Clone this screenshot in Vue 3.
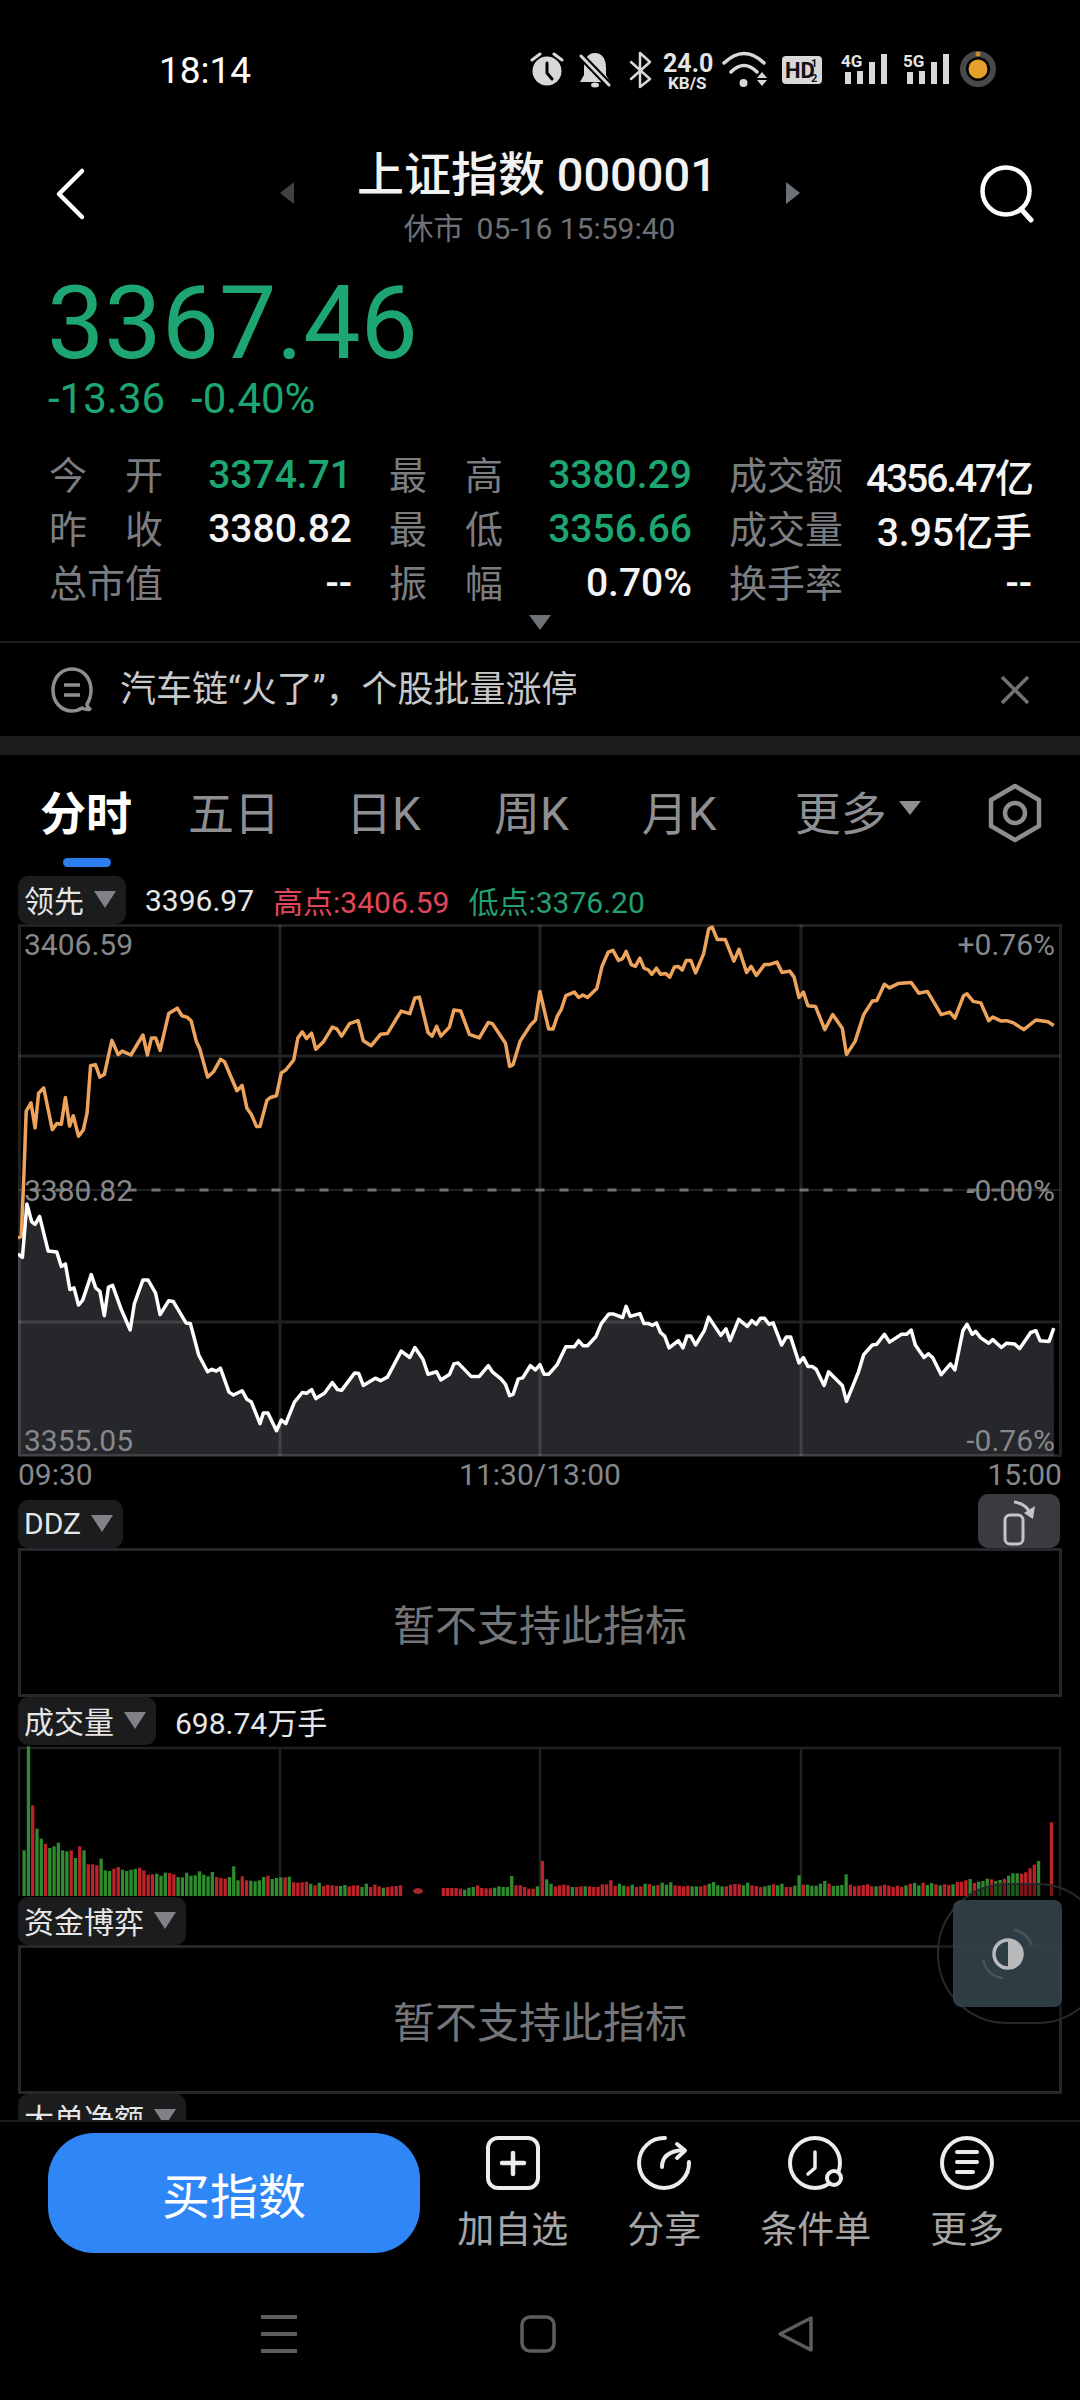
<template>
  <div class="page">
    <div class="scroll">
      <div class="status">
        <span class="clock">18:14</span>
        <svg class="status-icons" width="470" height="44" viewBox="530 48 470 44">
          <g fill="#d8d8d8" stroke="none">
            <circle cx="547" cy="71" r="14.5" />
            <path d="M595 53c-8 0-11 7-11 15v7l-4 7h30l-4-7v-7c0-8-3-15-11-15z" />
            <ellipse cx="595" cy="85" rx="4" ry="2.5" />
            <circle cx="743.5" cy="83" r="4" />
            <path d="M762 72l5 6h-10zM762 86l5-6h-10z" />
            <rect x="782" y="56" width="40" height="28" rx="4" />
            <rect x="845" y="72" width="6" height="12" /><rect x="857" y="71" width="6" height="13" />
            <rect x="869" y="62" width="6" height="22" /><rect x="881" y="54" width="6" height="30" />
            <rect x="907" y="72" width="6" height="12" /><rect x="919" y="71" width="6" height="13" />
            <rect x="931" y="62" width="6" height="22" /><rect x="943" y="54" width="6" height="30" />
          </g>
          <g fill="none" stroke="#d8d8d8" stroke-width="3" stroke-linecap="round">
            <path d="M532 60l8-6M554 54l8 6" />
            <path d="M547 63v10l5 6" stroke="#000" />
            <path d="M581 56l28 29" stroke="#000" stroke-width="7" />
            <path d="M581 56l28 29" />
            <path d="M631 62l19 17-10 8V53l10 9-19 17" stroke-width="2.5" stroke-linejoin="round" />
            <path d="M724 63Q744 44 764 63M731 72Q744 59 757 72" stroke-width="3.5" />
          </g>
          <text class="st-speed" x="663" y="72">24.0</text>
          <text class="st-kb" x="668" y="89">KB/S</text>
          <text class="st-hd" x="785" y="78">HD</text>
          <text class="st-frac" x="811" y="67">1</text>
          <text class="st-frac" x="811" y="82">2</text>
          <text class="st-g" x="841" y="67">4G</text>
          <text class="st-g" x="903" y="67">5G</text>
          <circle cx="978" cy="69" r="15" fill="none" stroke="#48494b" stroke-width="6" />
          <circle cx="978" cy="69" r="9.5" fill="#e6a02c" />
          <circle cx="978" cy="54" r="2.5" fill="#c98a2a" />
        </svg>
      </div>

      <div class="nav">
        <svg class="back" width="40" height="56" viewBox="0 0 40 56">
          <path d="M30 5L7 28l23 23" fill="none" stroke="#fff" stroke-width="4.5" stroke-linecap="round" stroke-linejoin="round" />
        </svg>
        <div class="nav-mid">
          <i class="tri-left"></i>
          <div class="title-box">
            <div class="title">上证指数 000001</div>
            <div class="subtitle"><span class="sub-state">休市</span>05-16 15:59:40</div>
          </div>
          <i class="tri-right"></i>
        </div>
        <svg class="search" width="56" height="58" viewBox="0 0 56 58">
          <circle cx="26" cy="26" r="23.5" fill="none" stroke="#fff" stroke-width="4.5" />
          <path d="M41 44l10 11" stroke="#fff" stroke-width="5" stroke-linecap="round" />
        </svg>
      </div>

      <div class="price">3367.46</div>
      <div class="change"><span>-13.36</span><span>-0.40%</span></div>

      <div class="stats">
        <div v-for="(s, i) in stats" :key="i" class="stat">
          <span class="stat-label">
            <b v-for="(ch, j) in s.label" :key="j">{{ ch }}</b>
          </span>
          <span class="stat-value" :class="s.tone">{{ s.value }}</span>
        </div>
      </div>
      <div class="expand"><i class="tri-down"></i></div>

      <div class="news">
        <svg width="46" height="46" viewBox="0 0 46 46" fill="none" stroke="#8c8e91" stroke-width="3.5">
          <path d="M41 42c-3 1-6 0-8-1-3 2-7 3-10 3C12 44 4 35 4 23S12 2 23 2s19 9 19 21c0 6-2 11-4 14 0 2 1 4 3 5z" stroke-linejoin="round" />
          <path d="M15 18h16M15 28h16" stroke-width="3.5" />
        </svg>
        <span class="news-text">汽车链“火了”，个股批量涨停</span>
        <svg class="news-close" width="30" height="30" viewBox="0 0 30 30">
          <path d="M2 2l26 26M28 2L2 28" stroke="#707275" stroke-width="3.5" />
        </svg>
      </div>
      <div class="band"></div>

      <div class="tabs">
        <span class="tab active">分时</span>
        <span class="tab five">五日</span>
        <span class="tab">日K</span>
        <span class="tab">周K</span>
        <span class="tab month">月K</span>
        <span class="tab more">更多<i class="tri-more"></i></span>
        <svg class="gear" width="54" height="60" viewBox="0 0 54 60" fill="none" stroke="#8c8e91" stroke-width="4.5" stroke-linejoin="round">
          <path d="M27 3l24 14v26L27 57 3 43V17z" />
          <circle cx="27" cy="30" r="10" />
        </svg>
      </div>
      <div class="tab-mark"></div>

      <div class="chart-wrap">
        <div class="legend">
          <div class="pill">领先<i class="tri"></i></div>
          <span class="lg-value">3396.97</span>
          <span class="lg-high">高点:3406.59</span>
          <span class="lg-low">低点:3376.20</span>
        </div>

        <svg class="chart" width="1044" height="533" viewBox="18 924 1044 533">
          <path :d="whiteArea" fill="#26272a" />
          <g stroke="rgba(255,255,255,0.13)" stroke-width="3" fill="none">
            <rect x="19.5" y="925.5" width="1041" height="530" />
            <path d="M280 925V1456M540 925V1456M801 925V1456M18 1056H1060M18 1322H1060" />
          </g>
          <path d="M18 1190H1060" stroke="rgba(255,255,255,0.12)" stroke-width="2" />
          <path d="M18 1190H1060" stroke="#707173" stroke-width="3" stroke-dasharray="9 15" stroke-dashoffset="10.5" />
          <polyline :points="orangeLine" fill="none" stroke="#eea35d" stroke-width="3.5" stroke-linejoin="round" />
          <polyline :points="whiteLine" fill="none" stroke="#fff" stroke-width="3.5" stroke-linejoin="round" />
          <text class="ch-txt" x="24" y="955">3406.59</text>
          <text class="ch-txt" x="24" y="1201">3380.82</text>
          <text class="ch-txt" x="24" y="1451">3355.05</text>
          <text class="ch-txt" x="1055" y="955" text-anchor="end">+0.76%</text>
          <text class="ch-txt" x="1055" y="1201" text-anchor="end">-0.00%</text>
          <text class="ch-txt" x="1055" y="1451" text-anchor="end">-0.76%</text>
        </svg>
        <div class="axis"><span>09:30</span><span>11:30/13:00</span><span>15:00</span></div>

        <div class="legend ddz">
          <div class="pill">DDZ<i class="tri"></i></div>
          <div class="rotate">
            <svg width="44" height="50" viewBox="0 0 44 50" fill="none" stroke="#c4c5c7" stroke-width="3">
              <rect x="8" y="17" width="18" height="29" rx="5" />
              <path d="M17 4c9 1 15 6 18 15" />
              <path d="M38 8l-2 13-9-6z" stroke="none" fill="#c4c5c7" />
            </svg>
          </div>
        </div>
        <div class="empty">暂不支持此指标</div>

        <div class="legend">
          <div class="pill">成交量<i class="tri"></i></div>
          <span class="lg-value">698.74万手</span>
        </div>
        <svg class="volume" width="1044" height="152" viewBox="18 1745 1044 152">
          <g stroke="rgba(255,255,255,0.13)" stroke-width="2.5" fill="none">
            <path d="M19 1896V1748H1060V1896M280 1748V1896M540 1748V1896M801 1748V1896" />
          </g>
          <rect v-for="(b, i) in bars" :key="i" :x="b.x" :y="b.y" width="3.3" :height="b.h" :fill="b.fill" />
          <ellipse cx="418" cy="1891" rx="5" ry="3" fill="#a2262c" />
        </svg>

        <div class="legend">
          <div class="pill">资金博弈<i class="tri"></i></div>
        </div>
        <div class="empty">暂不支持此指标</div>
        <div class="legend">
          <div class="pill">大单净额<i class="tri"></i></div>
        </div>
      </div>
    </div>

    <div class="bottom">
      <div class="actions">
        <div class="buy">买指数</div>
        <div class="act">
          <svg width="60" height="60" viewBox="483 2133 60 60" fill="none" stroke="#ececec" stroke-width="4" stroke-linecap="round">
            <rect x="488" y="2138" width="50" height="50" rx="10" />
            <path d="M513 2153v21M502 2163h22" stroke-width="4.5" />
          </svg>
          <span>加自选</span>
        </div>
        <div class="act">
          <svg width="60" height="60" viewBox="634 2133 60 60" fill="none" stroke="#ececec" stroke-width="4" stroke-linecap="round" stroke-linejoin="round">
            <path d="M665 2138A25 25 0 1 0 689 2162" />
            <path d="M662 2167c0-10 7-16 21-17" />
            <path d="M677 2144l8 6.500-8 7.500" />
          </svg>
          <span>分享</span>
        </div>
        <div class="act">
          <svg width="60" height="60" viewBox="786 2133 60 60" fill="none" stroke="#ececec" stroke-width="4" stroke-linecap="round" stroke-linejoin="round">
            <circle cx="815" cy="2163" r="25" />
            <path d="M815 2152v16l-7 6" stroke-width="3.500" />
            <circle cx="834" cy="2178" r="7" fill="#000" />
          </svg>
          <span>条件单</span>
        </div>
        <div class="act">
          <svg width="60" height="60" viewBox="938 2133 60 60" fill="none" stroke="#ececec" stroke-width="4" stroke-linecap="round">
            <circle cx="968" cy="2163" r="25" />
            <path d="M958 2152h20M958 2162h20M958 2172h16" />
          </svg>
          <span>更多</span>
        </div>
      </div>
      <div class="sysnav">
        <svg width="40" height="38" viewBox="0 0 40 38">
          <path d="M2 2h36M2 19h36M2 36h36" stroke="#5c5d5f" stroke-width="4" />
        </svg>
        <svg width="38" height="38" viewBox="0 0 38 38">
          <rect x="3" y="2" width="32" height="34" rx="8" fill="none" stroke="#5c5d5f" stroke-width="3.5" />
        </svg>
        <svg width="38" height="38" viewBox="0 0 38 38">
          <path d="M34 3v32L3 19z" fill="none" stroke="#5c5d5f" stroke-width="3.5" stroke-linejoin="round" />
        </svg>
      </div>
    </div>

    <div class="float-ring"></div>
    <div class="float-btn">
      <svg width="70" height="72" viewBox="0 0 70 72" fill="none">
        <circle cx="35" cy="36" r="14" stroke="#b8babc" stroke-width="3.5" />
        <path d="M35 21a15 15 0 0 1 0 30z" fill="#b8babc" />
        <path d="M41 12c8 1 15 7 18 15M30 60C20 59 12 52 10 42" stroke="#46555c" stroke-width="2.5" />
      </svg>
    </div>
  </div>
</template>

<script setup>
import { computed } from "vue";

const stats = [
  { label: "今开", value: "3374.71", tone: "down" },
  { label: "最高", value: "3380.29", tone: "down" },
  { label: "成交额", value: "4356.47亿", tone: "tight" },
  { label: "昨收", value: "3380.82" },
  { label: "最低", value: "3356.66", tone: "down" },
  { label: "成交量", value: "3.95亿手" },
  { label: "总市值", value: "--" },
  { label: "振幅", value: "0.70%" },
  { label: "换手率", value: "--" },
];

// traced from the reference, left half then right half (x scale 2.904, y scale 2.8)
const orangeL = [52,890,62,886,70,700,76,535,90,512,102,582,112,485,127,470,152,587,165,570,178,572,190,497,202,577,213,548,228,605,242,588,253,540,263,408,277,405,290,440,303,433,325,337,343,377,355,367,380,378,415,322,428,378,440,330,452,330,465,365,490,262,515,247,528,268,543,272,555,282,570,340,580,360,603,440,620,425,640,390,652,397,688,478,703,463,717,527,730,545,745,578,755,578,775,505,785,497,803,492,817,428,830,420,853,392,865,330,878,313,890,332,905,317,917,362,940,340,965,300,978,305,992,325,1015,290,1040,282,1055,338,1078,352,1105,320,1125,318,1150,278,1165,255,1190,262,1205,218,1218,216,1243,315,1255,325,1268,298,1280,325,1305,300,1318,252,1338,255,1363,320,1392,330,1418,287,1430,290,1468,345,1480,410,1490,405,1510,340,1540,295,1555,280,1568,200];
const orangeR = [25,305,38,305,50,270,62,250,75,212,100,202,112,217,125,210,138,217,165,192,180,130,198,90,212,85,228,113,240,108,250,88,265,125,277,130,290,107,302,135,315,140,325,152,338,135,350,152,365,150,377,160,390,132,402,130,413,140,425,113,438,113,452,148,475,95,490,25,500,20,515,55,538,55,563,115,578,82,600,147,613,130,628,155,652,125,665,125,688,118,703,147,725,143,738,160,752,217,765,202,778,240,800,242,827,307,850,265,878,303,890,377,915,340,940,265,965,227,978,225,1000,180,1015,190,1040,178,1078,175,1100,205,1125,200,1165,265,1190,258,1205,275,1230,212,1240,207,1258,228,1280,232,1303,282,1315,272,1340,283,1355,282,1375,288,1405,307,1440,280,1475,285,1492,295];
const whiteL = [52,935,65,945,78,795,92,845,102,852,115,830,140,927,165,930,178,970,190,963,203,1035,215,1030,228,1078,240,1065,265,993,278,1030,290,1040,303,1108,315,1028,327,1023,352,1090,378,1148,390,1075,415,1008,430,1008,452,1045,465,1105,490,1066,503,1068,540,1128,553,1130,577,1218,603,1265,615,1258,628,1263,640,1255,665,1322,678,1330,703,1318,717,1342,730,1350,755,1410,765,1380,778,1380,803,1430,817,1400,830,1410,855,1350,878,1323,890,1325,905,1315,917,1340,942,1325,965,1295,980,1315,992,1317,1030,1268,1042,1270,1055,1303,1090,1283,1105,1290,1125,1280,1165,1207,1190,1225,1205,1197,1228,1230,1243,1272,1268,1265,1280,1288,1305,1273,1318,1243,1330,1240,1368,1278,1392,1278,1418,1248,1430,1265,1455,1285,1468,1300,1480,1332,1490,1328,1505,1285,1518,1282,1540,1248,1555,1260,1568,1245];
const whiteR = [12,1272,25,1272,50,1245,75,1195,100,1195,112,1178,125,1192,138,1192,162,1167,178,1130,200,1103,212,1103,240,1113,250,1082,262,1110,290,1102,302,1130,315,1130,327,1135,338,1128,350,1155,362,1165,375,1198,402,1178,415,1198,427,1165,438,1165,452,1190,477,1150,490,1112,525,1163,540,1145,552,1178,577,1118,602,1138,615,1122,628,1132,640,1115,652,1115,665,1132,677,1128,702,1190,715,1168,728,1168,752,1240,765,1225,778,1250,790,1250,802,1258,825,1303,838,1265,878,1303,890,1348,925,1265,940,1217,965,1190,978,1188,1000,1160,1015,1182,1050,1160,1065,1160,1078,1148,1090,1190,1115,1225,1128,1215,1140,1225,1165,1273,1192,1243,1205,1260,1228,1150,1240,1132,1255,1160,1265,1152,1280,1170,1303,1185,1315,1175,1340,1197,1355,1185,1378,1187,1393,1200,1425,1155,1440,1150,1452,1178,1478,1180,1492,1143];

const toPoints = (arr, offset) => {
  const out = [];
  for (let i = 0; i < arr.length; i += 2) {
    out.push((offset + arr[i] / 2.904).toFixed(1) + "," + (920 + arr[i + 1] / 2.8).toFixed(1));
  }
  return out;
};

const orangeLine = computed(() => [...toPoints(orangeL, 0), ...toPoints(orangeR, 540)].join(" "));
const whitePts = computed(() => [...toPoints(whiteL, 0), ...toPoints(whiteR, 540)]);
const whiteLine = computed(() => whitePts.value.join(" "));
const whiteArea = computed(() => {
  const p = whitePts.value;
  return "M18 1456L" + p.join("L") + "L1054 1456Z";
});

// bar tops in zoomed crop units, g/r = colour, 0 = empty slot
const volL = "360g 48g 225r 295g 325g 340r 353g 348g 337g 360g 363g 360r 383g 348r 360g 402r 402r 405r 385g 420g 422g 415r 410r 418g 422g 418g 416g 412r 420r 433r 432r 430g 436g 427g 428r 432r 440g 441g 427g 436g 435g 423g 433g 438g 425g 440r 443r 445r 440g 408g 450g 438r 450r 451g 453g 450g 440g 436r 446g 443g 441g 441r 439g 456r 457r 456r 454r 460g 465r 457g 467r 463r 465r 467r 467g 464g 468r 465r 465r 470g 460g 470r 463r 468r 472g 470r 468r 467r 465r 0 0 0 0 0 0 0 0 0 473r 473r 473r 473r 475r 478g 472g 470g 465r 473r 474r 474r 472g 468g 470g 470g 437g 465r 465r 470r 475r 475r 468g";
const volR = "392r 447g 460g 468r 465r 463r 465r 470g 470r 468r 468g 468r 470r 470r 462r 462r 450r 467r 460g 466g 468r 463g 470r 468r 460g 462r 466g 464r 457g 463g 456g 465r 466r 468r 466r 468g 468g 468r 465r 460g 455g 465g 468g 468r 463r 461r 462r 465g 457g 465r 467r 470r 468g 465g 462r 465g 460g 470r 470r 466g 435g 463r 463g 466g 466g 460g 452g 460r 467g 466g 464g 432g 463r 468r 466r 464r 462r 468r 468g 466r 463r 466r 470r 466r 470r 465g 460r 458g 465g 457r 464g 458g 462r 465g 462r 464r 462g 455r 454r 450r 446g 458r 454g 452g 445g 447r 452g 449g 445r 436g 429g 429g 430r 426r 414r 403r 392g 0 0 276r";

const toBars = (str, x0) =>
  str.split(" ").map((tok, i) => {
    const top = parseInt(tok);
    if (!top) return null;
    const h = (497 - top) / 3;
    return {
      x: (x0 + i * 4.277 - 1.6).toFixed(2),
      y: (1896 - h).toFixed(1),
      h: h.toFixed(1),
      fill: tok.endsWith("r") ? "#bd2129" : "#2e8b2e",
    };
  }).filter(Boolean);

const bars = [...toBars(volL, 24.1), ...toBars(volR, 542.4)];
</script>

<style scoped>
.page {
  position: relative;
  width: 1080px;
  height: 2400px;
  background: #000;
  color: #fff;
  font-family: Roboto, "Noto Sans CJK SC", sans-serif;
  overflow: hidden;
}
.scroll {
  height: 2120px;
  overflow: hidden;
}
.status {
  height: 140px;
  display: flex;
  align-items: center;
  padding: 0 80px 0 159px;
  justify-content: space-between;
}
.clock {
  font-size: 37px;
  font-weight: 400;
}
.status-icons text {
  fill: #e4e4e4;
  font-family: Roboto, sans-serif;
  font-weight: 700;
}
.st-speed { font-size: 25px; }
.st-kb { font-size: 17px; }
.st-hd { font-size: 22px; fill: #111 !important; }
.st-frac { font-size: 11px; fill: #111 !important; }
.st-g { font-size: 17px; }

.nav {
  height: 106px;
  display: grid;
  grid-template-columns: 1fr auto 1fr;
  align-items: center;
  padding: 0 50px;
}
.back { margin-left: 2px; }
.search {
  justify-self: end;
  margin-right: -6px;
}
.nav-mid {
  display: flex;
  align-items: flex-start;
  align-self: start;
  margin-top: 8px;
}
.tri-left, .tri-right {
  width: 0;
  height: 0;
  margin-top: 34px;
  border-top: 11px solid transparent;
  border-bottom: 11px solid transparent;
}
.tri-left {
  border-right: 14px solid #3f4144;
  margin-right: 63px;
}
.tri-right {
  border-left: 14px solid #6d7278;
  margin-left: 69px;
}
.title-box {
  text-align: center;
}
.title {
  font-size: 47px;
  line-height: 54px;
  font-weight: 500;
  color: #f2f2f2;
  white-space: nowrap;
}
.subtitle {
  margin-top: 9px;
  padding-left: 5px;
  font-size: 30px;
  line-height: 36px;
  color: #6e7175;
  white-space: nowrap;
}
.sub-state {
  margin-right: 13px;
}
.price {
  margin: 27px 0 0 47px;
  font-size: 102px;
  line-height: 100px;
  color: #1ea672;
}
.change {
  margin: 1px 0 0 48px;
  display: flex;
  gap: 26px;
  font-size: 42px;
  line-height: 50px;
  color: #1ea672;
}
.stats {
  margin-top: 24px;
  padding: 0 49px;
  display: grid;
  grid-template-columns: repeat(3, 303px);
  column-gap: 37px;
  grid-auto-rows: 54px;
}
.stat {
  display: flex;
  align-items: center;
  justify-content: space-between;
  font-size: 38px;
}
.stat-label {
  width: 114px;
  display: flex;
  justify-content: space-between;
  color: #7b7d80;
  margin-top: -5px;
}
.stat-label b {
  font-weight: 400;
}
.stat-value {
  font-size: 39px;
  font-weight: 500;
  color: #f4f4f4;
  white-space: nowrap;
}
.stat-value.down {
  color: #1ea672;
}
.stat-value.tight {
  letter-spacing: -2.1px;
}
.expand {
  height: 31px;
  display: flex;
  justify-content: center;
  padding: 5px 0 0 0;
  box-sizing: border-box;
}
.tri-down {
  width: 0;
  height: 0;
  border-left: 11px solid transparent;
  border-right: 11px solid transparent;
  border-top: 15px solid #6e7175;
}
.news {
  height: 95px;
  box-sizing: border-box;
  border-top: 2px solid #1d1e20;
  display: flex;
  align-items: center;
  padding: 0 50px 0 49px;
  gap: 25px;
}
.news-text {
  font-size: 36px;
  line-height: 44px;
  color: #c8c9cb;
}
.news-close {
  margin-left: auto;
}
.band {
  height: 19px;
  background: #1b1c1e;
}
.tabs {
  height: 103px;
  box-sizing: border-box;
  padding: 6px 40px 0;
  display: flex;
  align-items: center;
  gap: 73px;
  font-size: 46px;
  color: #8d8f92;
  white-space: nowrap;
}
.tab.active {
  color: #fff;
  font-weight: 700;
  margin-right: -17px;
}
.tab.five {
  margin-right: -7px;
}
.tab.month {
  margin-right: 5px;
}
.tab.more {
  display: flex;
  align-items: center;
  gap: 12px;
}
.tri-more {
  width: 0;
  height: 0;
  border-left: 11px solid transparent;
  border-right: 11px solid transparent;
  border-top: 14px solid #8d8f92;
  margin-top: -4px;
}
.gear {
  flex: none;
  margin-left: -6px;
  margin-top: 6px;
}
.tab-mark {
  width: 48px;
  height: 9px;
  margin: 0 0 9px 63px;
  background: #2d7ff0;
  border-radius: 5px;
}
.chart-wrap {
  padding: 0 18px;
}
.legend {
  height: 48px;
  display: flex;
  align-items: center;
  gap: 19px;
  font-size: 30px;
  white-space: nowrap;
}
.pill {
  height: 48px;
  box-sizing: border-box;
  padding: 0 10px 2px 6px;
  display: flex;
  align-items: center;
  gap: 10px;
  background: #1b1c1e;
  border-radius: 10px;
  color: #e6e6e6;
}
.tri {
  width: 0;
  height: 0;
  border-left: 11px solid transparent;
  border-right: 11px solid transparent;
  border-top: 17px solid #808285;
}
.lg-value { color: #e6e6e6; }
.lg-high { color: #e0485a; }
.lg-low { color: #24a070; }
.chart, .volume {
  display: block;
}
.ch-txt {
  font-size: 30px;
  fill: #86888b;
}
.axis {
  height: 31px;
  box-sizing: border-box;
  padding-top: 4px;
  display: flex;
  justify-content: space-between;
  align-items: center;
  font-size: 30px;
  color: #86888b;
}
.ddz {
  height: 60px;
  align-items: flex-end;
  justify-content: space-between;
}
.rotate {
  width: 82px;
  height: 54px;
  border-radius: 10px;
  background: #3a3b3e;
  display: flex;
  align-items: flex-end;
  justify-content: center;
  margin-right: 2px;
  overflow: hidden;
}
.empty {
  height: 149px;
  box-sizing: border-box;
  border: 3px solid #26272a;
  display: flex;
  align-items: center;
  justify-content: center;
  font-size: 42px;
  color: #737578;
}
.bottom {
  height: 280px;
  box-sizing: border-box;
  border-top: 2px solid #1d1e20;
}
.actions {
  display: flex;
  padding: 11px 0 0 48px;
}
.buy {
  width: 372px;
  height: 120px;
  margin-right: 17px;
  background: #2f86f6;
  border-radius: 46px;
  display: flex;
  align-items: center;
  justify-content: center;
  font-size: 48px;
  font-weight: 400;
}
.act {
  width: 151.5px;
  display: flex;
  flex-direction: column;
  align-items: center;
}
.act span {
  margin-top: 16px;
  font-size: 37px;
  line-height: 44px;
  color: #a5a6a8;
}
.sysnav {
  margin-top: 62px;
  display: flex;
  justify-content: center;
  gap: 220px;
  padding-right: 6px;
}
.float-ring {
  position: absolute;
  left: 937px;
  top: 1883px;
  width: 170px;
  height: 141px;
  box-sizing: border-box;
  border: 2px solid #26282b;
  border-radius: 70px;
  background: rgba(0, 0, 0, 0.35);
}
.float-btn {
  position: absolute;
  left: 953px;
  top: 1900px;
  width: 109px;
  height: 107px;
  background: rgba(52, 68, 77, 0.88);
  border-radius: 8px;
  display: flex;
  align-items: center;
  justify-content: center;
}
</style>

<style>
html, body {
  margin: 0;
  background: #000;
}
</style>
